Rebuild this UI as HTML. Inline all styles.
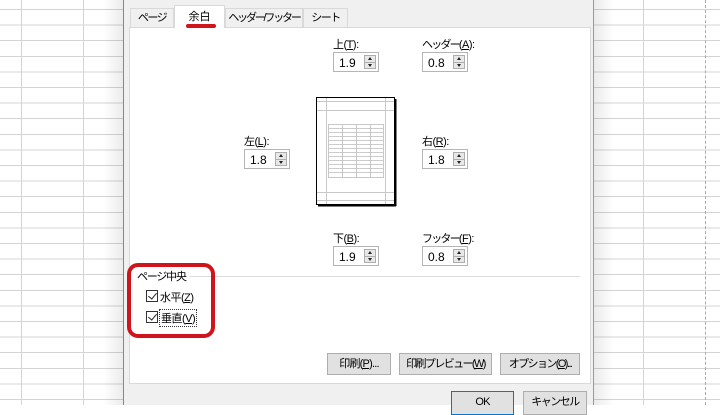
<!DOCTYPE html>
<html><head><meta charset="utf-8"><style>
*{margin:0;padding:0;box-sizing:border-box}
body{width:720px;height:405px;overflow:hidden;position:relative;background:#fff;font-family:"Liberation Sans","Noto Sans CJK JP",sans-serif;font-size:11px;color:#000;white-space:nowrap}
.a{position:absolute}
.grid{position:absolute;top:0;height:405px;background-image:repeating-linear-gradient(to bottom,transparent 0 9px,#d4d4d4 9px 10px,transparent 10px 15.6px)}
.sp{position:absolute;width:46px;height:20px;border:1px solid #b5b5b5;background:#fff;font-size:12px;padding:3px 0 0 5px}
.sp i{position:absolute;right:2px;top:2px;width:12px;height:14px;background:#e8e8e8;border:1px solid #adadad}
.sp i:before{content:"";position:absolute;left:3px;top:1px;border:2.5px solid transparent;border-bottom:3px solid #222;border-top:0}
.sp i:after{content:"";position:absolute;left:3px;bottom:1px;border:2.5px solid transparent;border-top:3px solid #222;border-bottom:0}
.sp i b{position:absolute;left:0;right:0;top:6px;height:1px;background:#adadad}
.lb{position:absolute;font-size:11px;letter-spacing:-0.5px}
.k{letter-spacing:-1.8px}
.btn{position:absolute;height:22px;background:#e1e1e1;border:1px solid #adadad;font-size:11px;text-align:center;line-height:20px;letter-spacing:-0.8px;overflow:hidden}
.tab{position:absolute;top:8px;height:19px;background:#f0f0f0;border:1px solid #d9d9d9;border-bottom:none;font-size:11px;text-align:center;line-height:18px;letter-spacing:-1.5px;overflow:hidden}
.cb{position:absolute;width:12px;height:12px;border:1px solid #333;background:#fff}
.cb:after{content:"";position:absolute;left:3px;top:0px;width:4px;height:7px;border:solid #222;border-width:0 1.3px 1.3px 0;transform:rotate(40deg)}
</style></head><body>
<div class="grid" style="left:0;width:123px"></div>
<div class="a" style="left:21px;top:0;width:1px;height:405px;background:#d4d4d4"></div>
<div class="a" style="left:83px;top:0;width:1px;height:405px;background:#d4d4d4"></div>
<div class="grid" style="left:594px;width:126px"></div>
<div class="a" style="left:643px;top:0;width:1px;height:405px;background:#d4d4d4"></div>
<div class="a" style="left:705px;top:0;width:0;height:405px;border-left:1px dashed #aaa"></div>
<div class="a" style="left:594px;top:0;width:20px;height:405px;background:linear-gradient(to right,rgba(0,0,0,0.08),transparent)"></div>
<div class="a" style="left:103px;top:0;width:20px;height:405px;background:linear-gradient(to left,rgba(0,0,0,0.08),transparent)"></div>
<!-- dialog -->
<div class="a" style="left:123px;top:0;width:471px;height:405px;background:#f0f0f0;border-left:1px solid #888;border-right:1px solid #999"></div>
<div class="a" style="left:129px;top:27px;width:462px;height:357px;background:#fff;border:1px solid #d9d9d9"></div>
<div class="tab" style="left:130px;width:44px">ページ</div>
<div class="tab" style="left:174px;top:5px;height:23px;width:51px;background:#fff;line-height:22px;letter-spacing:0">余白</div>
<div class="a" style="left:186px;top:24px;width:30px;height:4px;border-radius:2px;background:#d0141c"></div>
<div class="tab" style="left:225px;width:78px;letter-spacing:-2.2px">ヘッダー/フッター</div>
<div class="tab" style="left:303px;width:45px">シート</div>

<div class="lb" style="left:333px;top:36px">上(<u>T</u>):</div>
<div class="sp" style="left:333px;top:52px">1.9<i><b></b></i></div>
<div class="lb" style="left:422px;top:36px"><span class="k">ヘッダー</span>(<u>A</u>):</div>
<div class="sp" style="left:422px;top:52px">0.8<i><b></b></i></div>
<div class="lb" style="left:244px;top:133px">左(<u>L</u>):</div>
<div class="sp" style="left:244px;top:149px">1.8<i><b></b></i></div>
<div class="lb" style="left:422px;top:133px">右(<u>R</u>):</div>
<div class="sp" style="left:422px;top:149px">1.8<i><b></b></i></div>
<div class="lb" style="left:333px;top:230px">下(<u>B</u>):</div>
<div class="sp" style="left:333px;top:246px">1.9<i><b></b></i></div>
<div class="lb" style="left:422px;top:230px"><span class="k">フッター</span>(<u>F</u>):</div>
<div class="sp" style="left:422px;top:246px">0.8<i><b></b></i></div>

<svg class="a" style="left:314px;top:95px" width="85" height="113">
<rect x="2.5" y="2.5" width="78" height="107" fill="#fff" stroke="#000"/>
<line x1="81.5" y1="4" x2="81.5" y2="111" stroke="#000" stroke-width="2"/>
<line x1="4" y1="110.5" x2="82" y2="110.5" stroke="#000" stroke-width="2"/>
<g stroke="#c8c8c8">
<line x1="12.5" y1="3" x2="12.5" y2="109"/><line x1="71.5" y1="3" x2="71.5" y2="109"/>
<line x1="3" y1="6.5" x2="80" y2="6.5"/><line x1="3" y1="15.5" x2="80" y2="15.5"/>
<line x1="3" y1="97.5" x2="80" y2="97.5"/><line x1="3" y1="105.5" x2="80" y2="105.5"/>
<rect x="14.5" y="29.5" width="55" height="53" fill="none"/>
<line x1="28.5" y1="30" x2="28.5" y2="82"/><line x1="42.5" y1="30" x2="42.5" y2="82"/><line x1="56.5" y1="30" x2="56.5" y2="82"/>
</g>
<g stroke="#bbb" stroke-width="0.8">
<line x1="15" y1="33.5" x2="69" y2="33.5"/><line x1="15" y1="37.5" x2="69" y2="37.5"/><line x1="15" y1="41.5" x2="69" y2="41.5"/><line x1="15" y1="45.5" x2="69" y2="45.5"/><line x1="15" y1="49.5" x2="69" y2="49.5"/><line x1="15" y1="53.5" x2="69" y2="53.5"/><line x1="15" y1="57.5" x2="69" y2="57.5"/><line x1="15" y1="61.5" x2="69" y2="61.5"/><line x1="15" y1="65.5" x2="69" y2="65.5"/><line x1="15" y1="69.5" x2="69" y2="69.5"/><line x1="15" y1="73.5" x2="69" y2="73.5"/><line x1="15" y1="77.5" x2="69" y2="77.5"/>
</g></svg>

<div class="a" style="left:190px;top:276px;width:390px;height:1px;background:#dcdcdc"></div>
<div class="lb" style="left:137px;top:268px;letter-spacing:-1.2px">ページ中央</div>
<div class="cb" style="left:146px;top:290px"></div>
<div class="lb" style="left:160px;top:289px">水平(<u>Z</u>)</div>
<div class="cb" style="left:146px;top:311px"></div>
<div class="lb" style="left:159px;top:309px;border:1px dotted #333;padding:0 1px">垂直(<u>V</u>)</div>
<div class="a" style="left:127px;top:263px;width:88px;height:75px;border:4px solid #d0141c;border-radius:11px"></div>

<div class="btn" style="left:327px;top:353px;width:64px">印刷(<u>P</u>)...</div>
<div class="btn" style="left:399px;top:353px;width:93px;letter-spacing:-1.6px">印刷プレビュー(<u>W</u>)</div>
<div class="btn" style="left:500px;top:353px;width:80px;letter-spacing:-1.6px">オプション(<u>O</u>)...</div>
<div class="btn" style="left:451px;top:391px;width:63px;height:24px;border:1px solid #0078d7">OK</div>
<div class="btn" style="left:523px;top:391px;width:64px;height:24px;letter-spacing:-1.5px">キャンセル</div>
</body></html>
